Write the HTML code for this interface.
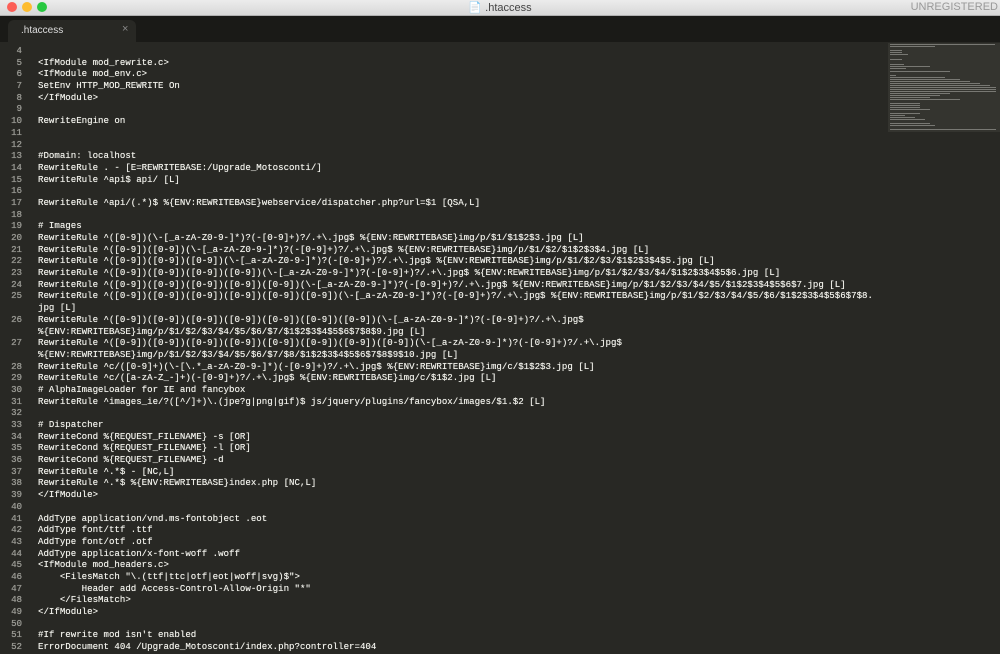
<!DOCTYPE html><html><head><style>
body{margin:0;width:1000px;height:654px;overflow:hidden;background:#282824;font-family:"Liberation Mono",monospace;}
#title{position:absolute;left:0;top:0;width:1000px;height:15px;background:linear-gradient(#ececec,#d8d8d8);border-bottom:1px solid #b0b0b0;}
.dot{position:absolute;top:2px;width:10px;height:10px;border-radius:50%;}
#tt{position:absolute;left:0;width:1000px;text-align:center;top:1px;font:11px "Liberation Sans",sans-serif;color:#444;}
#unreg{position:absolute;right:2px;top:1px;font:11px "Liberation Sans",sans-serif;color:#999;}
#tabbar{position:absolute;top:16px;left:0;width:1000px;height:26px;background:#1a1a17;}
#tab{position:absolute;left:8px;top:4px;width:128px;height:22px;background:#282824;border-radius:6px 6px 0 0;}
#tab span{position:absolute;left:13px;top:5px;font:10px "Liberation Sans",sans-serif;color:#ddd;}
#tab b{position:absolute;left:114px;top:3px;font:11px "Liberation Sans",sans-serif;color:#888;font-weight:normal}
#code{position:absolute;top:45px;left:0;font-size:9.1px;color:#f0f0ea;text-shadow:0 0 0.4px #f0f0ea;}
.r{height:11.69px;line-height:11.69px;white-space:pre;position:relative}
.n{position:absolute;left:0;width:22px;text-align:right;color:#90908a}
.t{position:absolute;left:38px}
#mini{position:absolute;left:888px;top:43px;width:112px;height:89px;background:#34342f;}
</style></head><body>
<div id="title"><div class="dot" style="left:7px;background:#fc5f57"></div><div class="dot" style="left:22px;background:#fdbc2e"></div><div class="dot" style="left:37px;background:#28c840"></div><div id="tt">📄 .htaccess</div><div id="unreg">UNREGISTERED</div></div>
<div id="tabbar"><div id="tab"><span>.htaccess</span><b>×</b></div></div>
<div id="mini">
<svg width="112" height="89"><g fill="#8a8a84" opacity=".8">
<rect x="2" y="1" width="105" height="1"/><rect x="2" y="3" width="45" height="1"/><rect x="2" y="7" width="12" height="1"/><rect x="2" y="9" width="12" height="1"/><rect x="2" y="11" width="18" height="1"/><rect x="2" y="16" width="12" height="1"/><rect x="2" y="21" width="14" height="1"/><rect x="2" y="23" width="40" height="1"/><rect x="2" y="25" width="16" height="1"/><rect x="2" y="28" width="60" height="1"/>
<rect x="2" y="32" width="6" height="1"/><rect x="2" y="34" width="55" height="1"/><rect x="2" y="36" width="70" height="1"/><rect x="2" y="38" width="80" height="1"/><rect x="2" y="40" width="90" height="1"/><rect x="2" y="42" width="100" height="1"/><rect x="2" y="44" width="106" height="1"/><rect x="2" y="46" width="106" height="1"/><rect x="2" y="48" width="106" height="1"/><rect x="2" y="50" width="60" height="1"/><rect x="2" y="52" width="50" height="1"/><rect x="2" y="54" width="40" height="1"/><rect x="2" y="56" width="70" height="1"/>
<rect x="2" y="60" width="30" height="1"/><rect x="2" y="62" width="30" height="1"/><rect x="2" y="64" width="30" height="1"/><rect x="2" y="66" width="40" height="1"/><rect x="2" y="70" width="30" height="1"/><rect x="2" y="72" width="15" height="1"/><rect x="2" y="74" width="25" height="1"/><rect x="2" y="76" width="35" height="1"/><rect x="2" y="80" width="40" height="1"/><rect x="2" y="82" width="45" height="1"/><rect x="2" y="86" width="106" height="1"/></g></svg>
</div>
<div id="code">
<div class="r"><span class="n">4</span></div>
<div class="r"><span class="n">5</span><span class="t">&lt;IfModule mod_rewrite.c&gt;</span></div>
<div class="r"><span class="n">6</span><span class="t">&lt;IfModule mod_env.c&gt;</span></div>
<div class="r"><span class="n">7</span><span class="t">SetEnv HTTP_MOD_REWRITE On</span></div>
<div class="r"><span class="n">8</span><span class="t">&lt;/IfModule&gt;</span></div>
<div class="r"><span class="n">9</span></div>
<div class="r"><span class="n">10</span><span class="t">RewriteEngine on</span></div>
<div class="r"><span class="n">11</span></div>
<div class="r"><span class="n">12</span></div>
<div class="r"><span class="n">13</span><span class="t">#Domain: localhost</span></div>
<div class="r"><span class="n">14</span><span class="t">RewriteRule . - [E=REWRITEBASE:/Upgrade_Motosconti/]</span></div>
<div class="r"><span class="n">15</span><span class="t">RewriteRule ^api$ api/ [L]</span></div>
<div class="r"><span class="n">16</span></div>
<div class="r"><span class="n">17</span><span class="t">RewriteRule ^api/(.*)$ %{ENV:REWRITEBASE}webservice/dispatcher.php?url=$1 [QSA,L]</span></div>
<div class="r"><span class="n">18</span></div>
<div class="r"><span class="n">19</span><span class="t"># Images</span></div>
<div class="r"><span class="n">20</span><span class="t">RewriteRule ^([0-9])(\-[_a-zA-Z0-9-]*)?(-[0-9]+)?/.+\.jpg$ %{ENV:REWRITEBASE}img/p/$1/$1$2$3.jpg [L]</span></div>
<div class="r"><span class="n">21</span><span class="t">RewriteRule ^([0-9])([0-9])(\-[_a-zA-Z0-9-]*)?(-[0-9]+)?/.+\.jpg$ %{ENV:REWRITEBASE}img/p/$1/$2/$1$2$3$4.jpg [L]</span></div>
<div class="r"><span class="n">22</span><span class="t">RewriteRule ^([0-9])([0-9])([0-9])(\-[_a-zA-Z0-9-]*)?(-[0-9]+)?/.+\.jpg$ %{ENV:REWRITEBASE}img/p/$1/$2/$3/$1$2$3$4$5.jpg [L]</span></div>
<div class="r"><span class="n">23</span><span class="t">RewriteRule ^([0-9])([0-9])([0-9])([0-9])(\-[_a-zA-Z0-9-]*)?(-[0-9]+)?/.+\.jpg$ %{ENV:REWRITEBASE}img/p/$1/$2/$3/$4/$1$2$3$4$5$6.jpg [L]</span></div>
<div class="r"><span class="n">24</span><span class="t">RewriteRule ^([0-9])([0-9])([0-9])([0-9])([0-9])(\-[_a-zA-Z0-9-]*)?(-[0-9]+)?/.+\.jpg$ %{ENV:REWRITEBASE}img/p/$1/$2/$3/$4/$5/$1$2$3$4$5$6$7.jpg [L]</span></div>
<div class="r"><span class="n">25</span><span class="t">RewriteRule ^([0-9])([0-9])([0-9])([0-9])([0-9])([0-9])(\-[_a-zA-Z0-9-]*)?(-[0-9]+)?/.+\.jpg$ %{ENV:REWRITEBASE}img/p/$1/$2/$3/$4/$5/$6/$1$2$3$4$5$6$7$8.</span></div>
<div class="r"><span class="t">jpg [L]</span></div>
<div class="r"><span class="n">26</span><span class="t">RewriteRule ^([0-9])([0-9])([0-9])([0-9])([0-9])([0-9])([0-9])(\-[_a-zA-Z0-9-]*)?(-[0-9]+)?/.+\.jpg$</span></div>
<div class="r"><span class="t">%{ENV:REWRITEBASE}img/p/$1/$2/$3/$4/$5/$6/$7/$1$2$3$4$5$6$7$8$9.jpg [L]</span></div>
<div class="r"><span class="n">27</span><span class="t">RewriteRule ^([0-9])([0-9])([0-9])([0-9])([0-9])([0-9])([0-9])([0-9])(\-[_a-zA-Z0-9-]*)?(-[0-9]+)?/.+\.jpg$</span></div>
<div class="r"><span class="t">%{ENV:REWRITEBASE}img/p/$1/$2/$3/$4/$5/$6/$7/$8/$1$2$3$4$5$6$7$8$9$10.jpg [L]</span></div>
<div class="r"><span class="n">28</span><span class="t">RewriteRule ^c/([0-9]+)(\-[\.*_a-zA-Z0-9-]*)(-[0-9]+)?/.+\.jpg$ %{ENV:REWRITEBASE}img/c/$1$2$3.jpg [L]</span></div>
<div class="r"><span class="n">29</span><span class="t">RewriteRule ^c/([a-zA-Z_-]+)(-[0-9]+)?/.+\.jpg$ %{ENV:REWRITEBASE}img/c/$1$2.jpg [L]</span></div>
<div class="r"><span class="n">30</span><span class="t"># AlphaImageLoader for IE and fancybox</span></div>
<div class="r"><span class="n">31</span><span class="t">RewriteRule ^images_ie/?([^/]+)\.(jpe?g|png|gif)$ js/jquery/plugins/fancybox/images/$1.$2 [L]</span></div>
<div class="r"><span class="n">32</span></div>
<div class="r"><span class="n">33</span><span class="t"># Dispatcher</span></div>
<div class="r"><span class="n">34</span><span class="t">RewriteCond %{REQUEST_FILENAME} -s [OR]</span></div>
<div class="r"><span class="n">35</span><span class="t">RewriteCond %{REQUEST_FILENAME} -l [OR]</span></div>
<div class="r"><span class="n">36</span><span class="t">RewriteCond %{REQUEST_FILENAME} -d</span></div>
<div class="r"><span class="n">37</span><span class="t">RewriteRule ^.*$ - [NC,L]</span></div>
<div class="r"><span class="n">38</span><span class="t">RewriteRule ^.*$ %{ENV:REWRITEBASE}index.php [NC,L]</span></div>
<div class="r"><span class="n">39</span><span class="t">&lt;/IfModule&gt;</span></div>
<div class="r"><span class="n">40</span></div>
<div class="r"><span class="n">41</span><span class="t">AddType application/vnd.ms-fontobject .eot</span></div>
<div class="r"><span class="n">42</span><span class="t">AddType font/ttf .ttf</span></div>
<div class="r"><span class="n">43</span><span class="t">AddType font/otf .otf</span></div>
<div class="r"><span class="n">44</span><span class="t">AddType application/x-font-woff .woff</span></div>
<div class="r"><span class="n">45</span><span class="t">&lt;IfModule mod_headers.c&gt;</span></div>
<div class="r"><span class="n">46</span><span class="t">    &lt;FilesMatch "\.(ttf|ttc|otf|eot|woff|svg)$"&gt;</span></div>
<div class="r"><span class="n">47</span><span class="t">        Header add Access-Control-Allow-Origin "*"</span></div>
<div class="r"><span class="n">48</span><span class="t">    &lt;/FilesMatch&gt;</span></div>
<div class="r"><span class="n">49</span><span class="t">&lt;/IfModule&gt;</span></div>
<div class="r"><span class="n">50</span></div>
<div class="r"><span class="n">51</span><span class="t">#If rewrite mod isn't enabled</span></div>
<div class="r"><span class="n">52</span><span class="t">ErrorDocument 404 /Upgrade_Motosconti/index.php?controller=404</span></div>
</div>
</body></html>
